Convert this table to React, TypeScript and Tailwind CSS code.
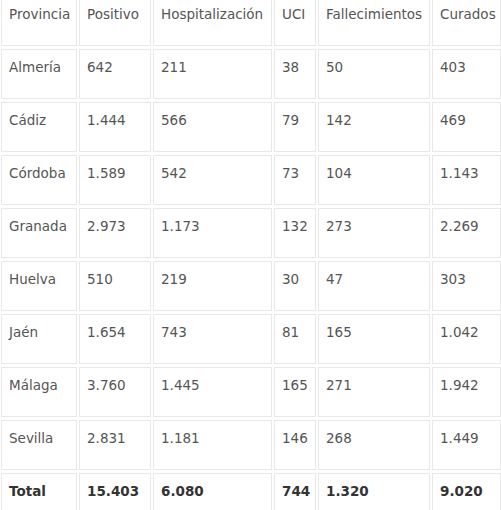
const headers = ["Provincia", "Positivo", "Hospitalización", "UCI", "Fallecimientos", "Curados"];

const rows: string[][] = [
  ["Almería", "642", "211", "38", "50", "403"],
  ["Cádiz", "1.444", "566", "79", "142", "469"],
  ["Córdoba", "1.589", "542", "73", "104", "1.143"],
  ["Granada", "2.973", "1.173", "132", "273", "2.269"],
  ["Huelva", "510", "219", "30", "47", "303"],
  ["Jaén", "1.654", "743", "81", "165", "1.042"],
  ["Málaga", "3.760", "1.445", "165", "271", "1.942"],
  ["Sevilla", "2.831", "1.181", "146", "268", "1.449"],
];

const total = ["Total", "15.403", "6.080", "744", "1.320", "9.020"];

function Cell({ value, bold }: { value: string; bold?: boolean }) {
  return (
    <td
      className={`h-[50px] border border-[#e8e8e8] px-[7px] pt-[7px] align-top whitespace-nowrap leading-[20px] ${
        bold ? "font-bold text-[#333]" : "text-[#555]"
      }`}
    >
      {value}
    </td>
  );
}

export default function App() {
  return (
    <div className="h-[510px] w-[501px] overflow-hidden bg-white">
      <table
        className="-mt-[7px] -ml-[1px] w-[504px] table-fixed border-separate [border-spacing:2px_3px] text-[13.5px]"
        style={{ fontFamily: '"DejaVu Sans", Verdana, sans-serif' }}
      >
        <colgroup>
          <col className="w-[76px]" />
          <col className="w-[72px]" />
          <col className="w-[119px]" />
          <col className="w-[42px]" />
          <col className="w-[112px]" />
          <col className="w-[69px]" />
        </colgroup>
        <tbody>
          <tr>
            {headers.map((h) => (
              <Cell key={h} value={h} />
            ))}
          </tr>
          {rows.map((r) => (
            <tr key={r[0]}>
              {r.map((v, i) => (
                <Cell key={i} value={v} />
              ))}
            </tr>
          ))}
          <tr>
            {total.map((v, i) => (
              <Cell key={i} value={v} bold />
            ))}
          </tr>
        </tbody>
      </table>
    </div>
  );
}
